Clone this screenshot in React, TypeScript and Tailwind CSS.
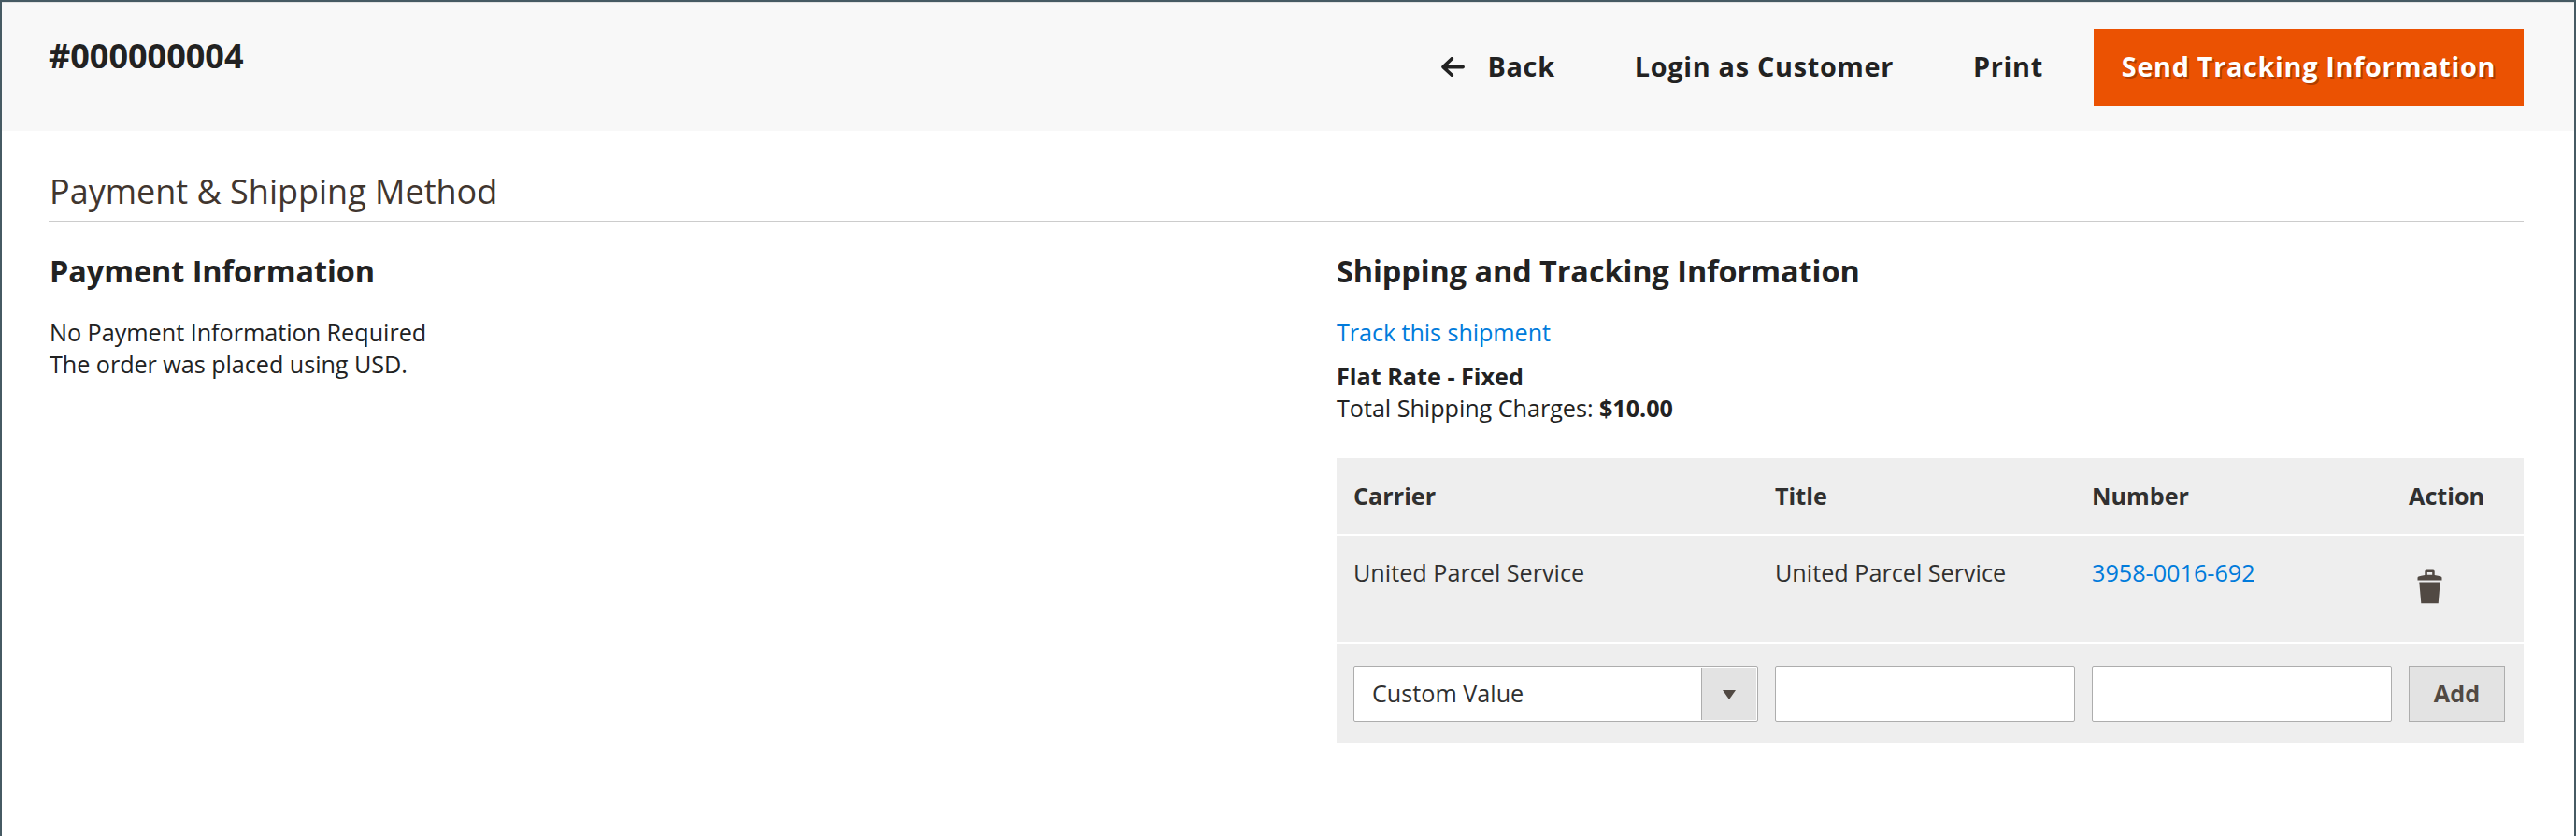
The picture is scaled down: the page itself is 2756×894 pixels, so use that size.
import React from 'react';

const GRID = 'grid grid-cols-[433px_321px_321px_103px] gap-[18px] bg-[#eeeeee] pl-[18px] text-[#303030]';
const ACTION = 'h-[80px] shrink-0 text-[28.8px] leading-[80px] font-bold tracking-[0.025em] whitespace-nowrap';

function ArrowLeft() {
  return (
    <svg className="mt-[30px] mr-[24px] h-[21px] w-[25px]" viewBox="0 0 25 21" fill="none" stroke="#222222" strokeWidth="3.6" strokeLinecap="round" strokeLinejoin="round">
      <path d="M23.2 10.6H2M11.3 1.7L2 10.6l9.3 8.7" />
    </svg>
  );
}

function Trash() {
  return (
    <svg className="h-[37px] w-[27px]" viewBox="0 0 27 37" fill="#514943">
      <path fillRule="evenodd" d="M8.3 6V2q0-1.6 1.6-1.6h7.2q1.6 0 1.6 1.6v4q4.500 .6 6.800 1.500 1 .4 1 1.400v2.700H.5V8.900q0-1 1-1.400Q3.800 6.600 8.300 6zm2.500-.3h5.400V2.900h-5.400z" />
      <path d="M2.300 13.600h22.400L22.700 36.300H4.300z" />
    </svg>
  );
}

function Field({ label }: { label: string }) {
  return <input type="text" aria-label={label} className="h-[60px] w-full rounded-[2px] border border-[#adadad] bg-white px-[18px] outline-none" />;
}

export default function App() {
  return (
    <div className="h-[894px] w-full border-x-2 border-t-2 border-[#465a63] bg-white font-['Open_Sans',sans-serif] text-[25.2px] leading-[34px] text-[#222222]">
      <header className="flex h-[138px] items-start justify-between border-t border-[#e3e3e3] bg-[#f8f8f8] pr-[54px] pl-[50px]">
        <h1 className="mt-[33px] text-[36px] leading-[48px] font-bold">#000000004</h1>
        <div className="mt-[28px] flex items-start">
          <button className={`${ACTION} mr-[85px] flex items-start`}>
            <ArrowLeft />
            Back
          </button>
          <button className={`${ACTION} mr-[85px]`}>Login as Customer</button>
          <button className={`${ACTION} mr-[54px]`}>Print</button>
          <button className="h-[82px] w-[460px] bg-[#eb5202] pb-[2px] text-[28.8px] leading-[80px] font-bold tracking-[0.024em] whitespace-nowrap text-white [text-shadow:2px_2px_0_rgba(0,0,0,0.25)]">
            Send Tracking Information
          </button>
        </div>
      </header>

      <main className="mr-[54px] ml-[50px] pt-[41px]">
        <h2 className="border-b border-[#cccccc] pb-[7px] pl-px text-[36px] leading-[48px] text-[#41362f]">Payment &amp; Shipping Method</h2>
        <div className="mt-[30px] grid grid-cols-[1fr_1270px]">
          <section className="pl-px">
            <h3 className="mb-[27px] text-[32.4px] leading-[44px] font-bold tracking-[-0.05px]">Payment Information</h3>
            <p className="tracking-[-0.02px]">No Payment Information Required</p>
            <p className="tracking-[-0.05px]">The order was placed using USD.</p>
          </section>

          <section>
            <h3 className="mb-[27px] text-[32.4px] leading-[44px] font-bold tracking-[-0.05px]">Shipping and Tracking Information</h3>
            <p className="mb-[13px] tracking-[-0.08px] text-[#007bdb]"><a>Track this shipment</a></p>
            <p className="font-bold">Flat Rate - Fixed</p>
            <p className="tracking-[-0.04px]">Total Shipping Charges: <b className="font-bold">$10.00</b></p>

            <div className="mt-[37px] flex flex-col gap-[2px]">
              <div className={`${GRID} h-[81px] pt-[23px] font-bold`}>
                <span>Carrier</span>
                <span>Title</span>
                <span>Number</span>
                <span>Action</span>
              </div>
              <div className={`${GRID} h-[114px] pt-[22px]`}>
                <span>United Parcel Service</span>
                <span>United Parcel Service</span>
                <a className="text-[#007bdb]">3958-0016-692</a>
                <button className="flex items-start pt-[14px] pl-[9px]" aria-label="Delete"><Trash /></button>
              </div>
              <div className={`${GRID} h-[106px] pt-[23px]`}>
                <div className="flex h-[60px] rounded-[2px] border border-[#adadad] bg-white py-px pr-px">
                  <span className="flex-1 pl-[19px] leading-[54px]">Custom Value</span>
                  <span className="flex w-[59px] justify-center border-l border-[#adadad] bg-[#e3e3e3] pt-[24px]">
                    <svg className="h-[10px] w-[14px]" viewBox="0 0 14 10" fill="#514943"><path d="M0 0h14L7 10z" /></svg>
                  </span>
                </div>
                <Field label="Title" />
                <Field label="Number" />
                <button className="h-[60px] border border-[#adadad] bg-[#e3e3e3] pb-px leading-[57px] font-bold text-[#514943]">Add</button>
              </div>
            </div>
          </section>
        </div>
      </main>
    </div>
  );
}
